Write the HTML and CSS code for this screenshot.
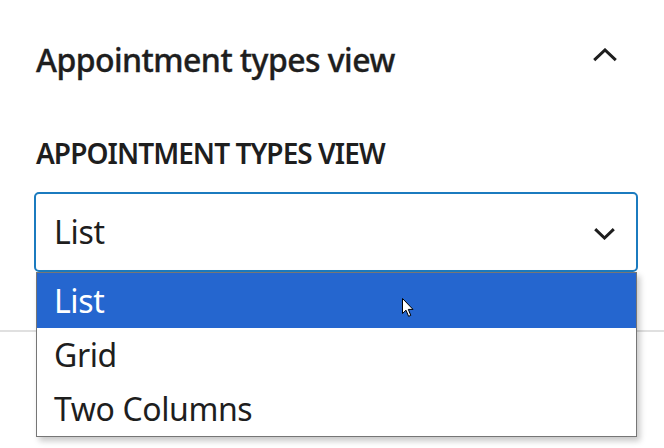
FILE: index.html
```html
<!DOCTYPE html>
<html lang="en">
<head>
<meta charset="utf-8">
<title>Appointment types view</title>
<link rel="stylesheet" href="styles.css">
</head>
<body>
<div class="sidebar">
  <section class="panel">
    <div class="panel-header">
      <h2 class="panel-title">Appointment types view</h2>
      <svg class="toggle-icon" width="24" height="24" viewBox="0 0 24 24" aria-hidden="true">
        <path d="M1.2 12.2 L12 2 L22.8 12.2" fill="none" stroke="#1e1e1e" stroke-width="3"/>
      </svg>
    </div>
    <div class="panel-body">
      <label class="field-label" for="view">Appointment types view</label>
      <div class="select" id="view">
        <span class="select-value">List</span>
        <svg class="select-arrow" width="21" height="12" viewBox="0 0 21 12" aria-hidden="true">
          <path d="M1.2 1.2 L10.5 10 L19.8 1.2" fill="none" stroke="#1e1e1e" stroke-width="3"/>
        </svg>
      </div>
    </div>
  </section>
  <ul class="dropdown" role="listbox">
    <li class="option selected">List</li>
    <li class="option">Grid</li>
    <li class="option">Two Columns</li>
  </ul>
  <svg class="cursor" width="13" height="20" viewBox="0 0 13 20" aria-hidden="true">
    <path d="M0.5 0.5 L0.5 15.5 L4 12.2 L6.6 18.3 L8.8 17.4 L6.3 11.4 L11 11.4 Z" fill="#fff" stroke="#000" stroke-width="1"/>
  </svg>
</div>
</body>
</html>
```
FILE: styles.css
```css
html, body {
  margin: 0;
  padding: 0;
  background: #fff;
}

body {
  font-family: "Noto Sans", "Open Sans", sans-serif;
  color: #1e1e1e;
  width: 664px;
  height: 448px;
  overflow: hidden;
}

.sidebar {
  position: relative;
  height: 448px;
}

.panel {
  border-bottom: 2px solid #e0e0e0;
}

.panel-header {
  display: flex;
  align-items: center;
  justify-content: space-between;
  padding: 45px 47px 0 36px;
}

.panel-title {
  margin: 0;
  font-size: 32px;
  line-height: 30px;
  font-weight: 500;
  letter-spacing: -0.55px;
  -webkit-text-stroke: 0.35px #1e1e1e;
}

.toggle-icon {
  display: block;
  flex: none;
}

.panel-body {
  display: flex;
  flex-direction: column;
  padding: 64px 26px 58px 34px;
}

.field-label {
  display: block;
  margin: 0 0 25px 2px;
  font-size: 28px;
  line-height: 28px;
  font-weight: 600;
  text-transform: uppercase;
  letter-spacing: -0.95px;
}

.select {
  display: flex;
  align-items: center;
  justify-content: space-between;
  box-sizing: border-box;
  height: 80px;
  padding: 0 21px 0 18px;
  border: 2px solid #1b7bbf;
  border-radius: 5px;
  background: #fff;
}

.select-value {
  font-size: 32px;
  line-height: 32px;
  letter-spacing: -0.3px;
}

.select-arrow {
  display: block;
  margin-top: 3px;
}

.dropdown {
  position: absolute;
  top: 272px;
  left: 36px;
  width: 601px;
  box-sizing: border-box;
  margin: 0;
  padding: 0;
  list-style: none;
  background: #fff;
  border: 1px solid #767676;
  box-shadow: 3px 4px 6px rgba(0, 0, 0, 0.22);
}

.option {
  height: 54px;
  line-height: 54px;
  padding-left: 17px;
  font-size: 32px;
  letter-spacing: -0.4px;
  color: #1e1e1e;
}

.option.selected {
  height: 55px;
  line-height: 55px;
  background: #2566cf;
  color: #fff;
}

.cursor {
  position: absolute;
  left: 402px;
  top: 298px;
}
```
